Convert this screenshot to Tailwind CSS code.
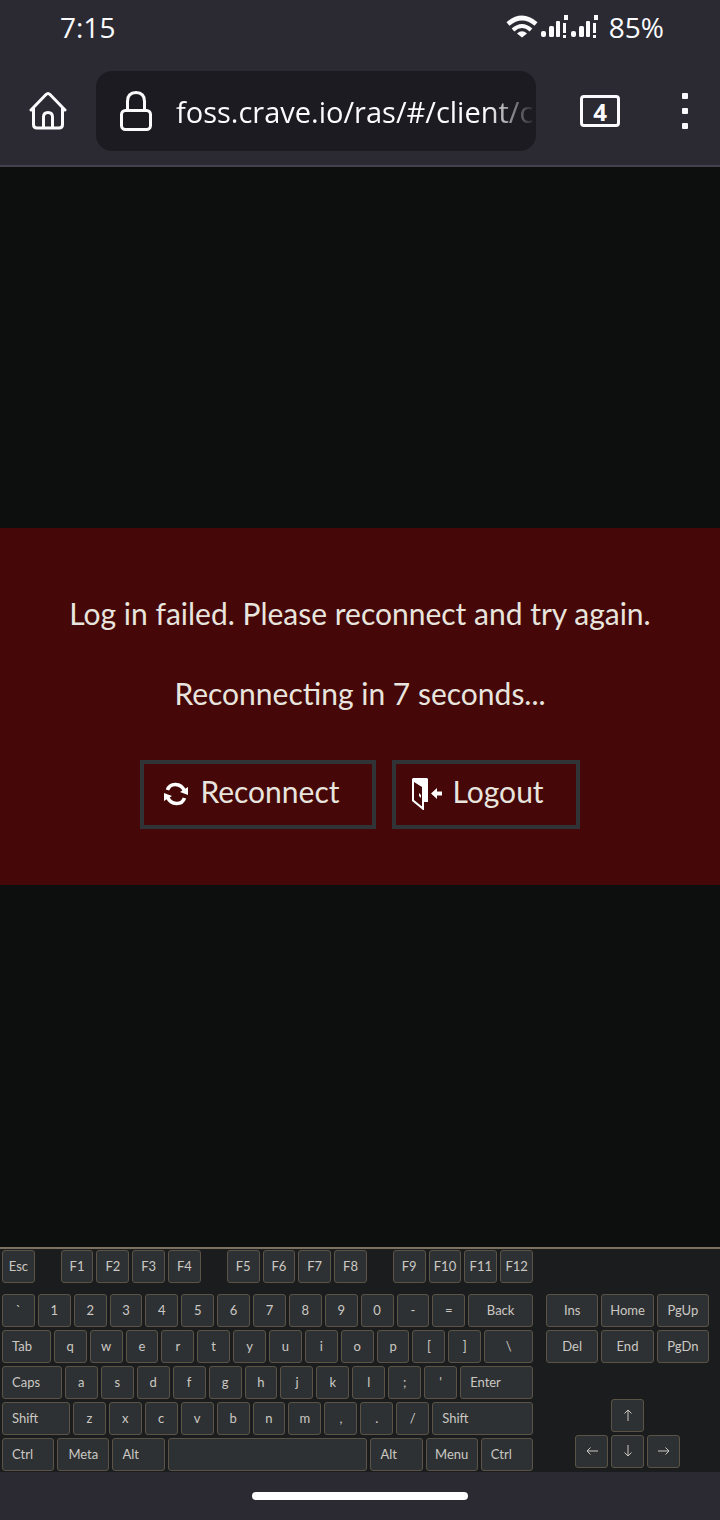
<!DOCTYPE html>
<html lang="en">
<head>
<meta charset="utf-8">
<meta name="viewport" content="width=device-width, initial-scale=1">
<title>Remote client</title>
<script src="https://cdn.jsdelivr.net/npm/@tailwindcss/browser@4"></script>
</head>
<body class="flex min-h-screen flex-col bg-[#0c0f0e] font-['Lato',sans-serif] text-[#e8e4de]">

<header class="border-b-2 border-[#42414d] bg-[#2b2a33] font-['Open_Sans',sans-serif] text-[#fbfbfe]">
  <div class="flex h-14 items-center pr-14 pb-[2px] pl-15 text-[28px] leading-8">
    <time class="mr-auto">7:15</time>
    <svg class="mr-[3px] h-6 w-8" viewBox="0 0 32 24" fill="none" stroke="currentColor" aria-label="Wi-Fi">
      <path d="M2 9Q16-3 30 9" stroke-width="4.600"/>
      <path d="M7 15Q16 7 25 15" stroke-width="4"/>
      <path d="M16 22.500L11 18.500Q16 14 21 18.500Z" fill="currentColor" stroke="none"/>
    </svg>
    <svg class="h-6 w-[58px]" viewBox="0 0 58 24" fill="currentColor" aria-label="Signal">
      <g id="signal">
        <rect x="0" y="16" width="5" height="6" rx="2"/>
        <rect x="8" y="11" width="5" height="11" rx="1.500"/>
        <rect x="15" y="6" width="4" height="16" rx="1"/>
        <path d="M23 0h4v5h-4zM22 8h3v10h-3zM22 20h3v3h-3z"/>
      </g>
      <use href="#signal" x="30"/>
    </svg>
    <span class="ml-[10px]">85%</span>
  </div>
  <div class="flex items-center pt-[15px] pb-[14px] pl-7">
    <button class="mr-7" aria-label="Home">
      <svg class="size-10" viewBox="0 0 40 40" fill="none" stroke="currentColor" stroke-width="3" stroke-linecap="round" stroke-linejoin="round">
        <path d="M3 19L18 3.500Q20 1.500 22 3.500L37 19M5.500 17V33.500Q5.500 37 9 37H31Q34.500 37 34.500 33.500V17M15.500 36.500V26Q15.500 21.500 20 21.500T24.500 26V36.500"/>
      </svg>
    </button>
    <div class="flex h-20 min-w-0 flex-1 items-center overflow-hidden rounded-2xl bg-[#1c1b22] pl-6">
      <svg class="mr-6 h-10 w-8 shrink-0" viewBox="0 0 32 40" fill="none" stroke="currentColor" stroke-width="3" aria-hidden="true">
        <rect x="1.500" y="19.500" width="29" height="19" rx="4"/>
        <path d="M7.500 19V10.500Q7.500 1.500 16 1.500T24.500 10.500V19"/>
      </svg>
      <input class="min-w-0 flex-1 bg-transparent pt-[2px] text-[29px] leading-10 outline-none [mask-image:linear-gradient(to_left,transparent,black_48px)]" aria-label="Address" value="foss.crave.io/ras/#/client/cGVhcg">
    </div>
    <button class="mr-[46px] ml-11 h-8 w-10 rounded-[4px] border-3 border-current pt-px text-2xl leading-6 font-bold" aria-label="4 open tabs">4</button>
    <button class="mr-8 ml-4 flex flex-col gap-[9px]" aria-label="Menu">
      <i class="size-[6px] rounded-[1px] bg-current"></i>
      <i class="size-[6px] rounded-[1px] bg-current"></i>
      <i class="size-[6px] rounded-[1px] bg-current"></i>
    </button>
  </div>
</header>

<main class="flex flex-1 flex-col justify-center pb-[2px]">
  <section class="bg-[#450707] pt-[65px] pb-14 text-center text-[30px] leading-10" role="alertdialog" aria-label="Connection error">
    <p>Log in failed. Please reconnect and try again.</p>
    <p class="mt-10">Reconnecting in 7 seconds...</p>
    <div class="mt-[47px] flex justify-center gap-4">
      <button class="flex items-center border-4 border-[#303436] pt-[7px] pr-8 pb-[14px] pl-5">
        <svg class="mt-[6px] mr-3 size-6" viewBox="0 0 24 24" fill="none" stroke="white" stroke-width="3.600" aria-hidden="true">
          <path d="M3.500 8C6 .5 17 .5 20.500 9M20.500 16C18 23.500 7 23.500 3.500 15"/>
          <path d="M24 5V13L16 10ZM0 19V11L8 14Z" fill="white" stroke="none"/>
        </svg>
        Reconnect
      </button>
      <button class="flex items-center border-4 border-[#303436] pt-[7px] pr-8 pb-[14px] pl-4">
        <svg class="mt-[6px] mr-[11px] h-8 w-[30px]" viewBox="0 0 30 32" fill="white" aria-hidden="true">
          <path fill-rule="evenodd" d="M0 1L1 0H15L16 1V24H12V32H11L0 23ZM2 4V22L10 28.500V9Z"/>
          <path d="M7 15L9 17V20L7 18ZM19 15.500L25 10V13.500H30V17.500H25V21Z"/>
        </svg>
        Logout
      </button>
    </div>
  </section>
</main>

<section class="grid grid-cols-[531fr_163fr] gap-[13px] border-t-2 border-[#7c7160] bg-[#1b1c1d] pt-px pr-[11px] pb-px pl-[2px] text-[13px] leading-4 text-[#cbc8c3] [text-shadow:1px_1px_1px_#151617] [&_button]:h-[33px] [&_button]:min-w-0 [&_button]:rounded-[3px] [&_button]:border [&_button]:border-[#5b5346] [&_button]:bg-[#2e3133] [&_button]:pb-[2px]" aria-label="On-screen keyboard">
  <div class="flex flex-col gap-[3px]">
    <div class="mb-2 grid grid-cols-[33fr_20fr_repeat(4,33fr)_20fr_repeat(4,33fr)_20fr_repeat(4,33fr)] gap-[3px]">
      <button>Esc</button><span></span>
      <button>F1</button><button>F2</button><button>F3</button><button>F4</button><span></span>
      <button>F5</button><button>F6</button><button>F7</button><button>F8</button><span></span>
      <button>F9</button><button>F10</button><button>F11</button><button>F12</button>
    </div>
    <div class="grid grid-cols-[repeat(13,33fr)_65fr] gap-[3px]">
      <button>`</button><button>1</button><button>2</button><button>3</button><button>4</button><button>5</button><button>6</button><button>7</button><button>8</button><button>9</button><button>0</button><button>-</button><button>=</button><button>Back</button>
    </div>
    <div class="grid grid-cols-[49fr_repeat(12,33fr)_49fr] gap-[3px]">
      <button class="pl-[9px] text-left">Tab</button><button>q</button><button>w</button><button>e</button><button>r</button><button>t</button><button>y</button><button>u</button><button>i</button><button>o</button><button>p</button><button>[</button><button>]</button><button>\</button>
    </div>
    <div class="grid grid-cols-[60fr_repeat(11,33fr)_73fr] gap-[3px]">
      <button class="pl-[9px] text-left">Caps</button><button>a</button><button>s</button><button>d</button><button>f</button><button>g</button><button>h</button><button>j</button><button>k</button><button>l</button><button>;</button><button>'</button><button class="pl-[9px] text-left">Enter</button>
    </div>
    <div class="grid grid-cols-[68fr_repeat(10,33fr)_101fr] gap-[3px]">
      <button class="pl-[9px] text-left">Shift</button><button>z</button><button>x</button><button>c</button><button>v</button><button>b</button><button>n</button><button>m</button><button>,</button><button>.</button><button>/</button><button class="pl-[9px] text-left">Shift</button>
    </div>
    <div class="grid grid-cols-[52fr_52fr_52fr_199fr_52fr_52fr_52fr] gap-[3px]">
      <button class="pl-[9px] text-left">Ctrl</button><button>Meta</button><button class="pl-[9px] text-left">Alt</button><button aria-label="Space"></button><button class="pl-[9px] text-left">Alt</button><button>Menu</button><button class="pl-[9px] text-left">Ctrl</button>
    </div>
  </div>
  <div class="flex flex-col justify-between pt-11 pb-[3px]">
    <div class="grid grid-cols-3 gap-[3px]">
      <button>Ins</button><button>Home</button><button>PgUp</button>
      <button>Del</button><button>End</button><button>PgDn</button>
    </div>
    <div class="grid grid-cols-[33px_33px_33px] justify-center gap-[3px] [&_svg]:mx-auto [&_svg]:size-3 [&_svg]:fill-none [&_svg]:stroke-current">
      <button class="col-start-2" aria-label="Up"><svg viewBox="0 0 12 12"><path d="M6 12V1M2.500 4.500L6 1L9.500 4.500"/></svg></button>
      <button class="col-start-1" aria-label="Left"><svg viewBox="0 0 12 12"><path d="M12 6H1M4.500 2.500L1 6L4.500 9.500"/></svg></button>
      <button aria-label="Down"><svg viewBox="0 0 12 12"><path d="M6 0V11M2.500 7.500L6 11L9.500 7.500"/></svg></button>
      <button aria-label="Right"><svg viewBox="0 0 12 12"><path d="M0 6H11M7.500 2.500L11 6L7.500 9.500"/></svg></button>
    </div>
  </div>
</section>

<footer class="flex h-12 items-center justify-center bg-[#2b2a33]">
  <div class="h-2 w-3/10 rounded-full bg-white"></div>
</footer>
</body>
</html>
